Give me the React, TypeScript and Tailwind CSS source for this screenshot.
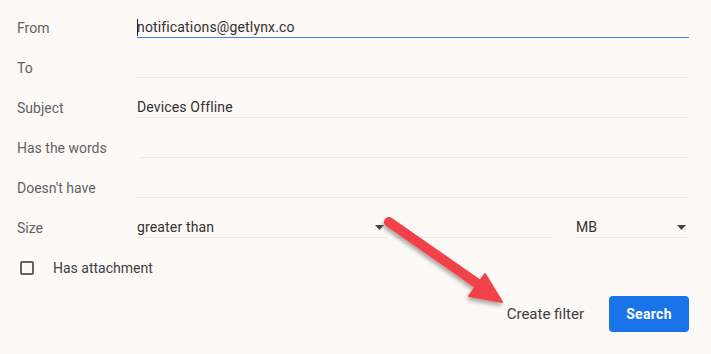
import React from "react";

function Caret() {
  return (
    <svg width="9" height="5" viewBox="0 0 9 5" className="shrink-0">
      <path d="M0 0 L9 0 L4.5 5 Z" fill="#444746" />
    </svg>
  );
}

function Row({ label, children }: { label: string; children?: React.ReactNode }) {
  return (
    <div className="flex h-10 items-center">
      <div className="w-[120px] shrink-0 text-[14px] text-[#5f6368]">{label}</div>
      {children}
    </div>
  );
}

function Field({ value, focused, indent }: { value?: string; focused?: boolean; indent?: boolean }) {
  return (
    <div
      className={
        "flex h-5 flex-1 items-center border-b text-[14px] leading-[19px] tracking-[0.15px] text-[#303134] " +
        (focused ? "border-[#4a80e3]" : "border-[#ebe8e5]") +
        (indent ? " ml-[3px]" : "")
      }
    >
      {focused && <span className="mr-[-1px] h-[17px] w-px bg-[#202124]" />}
      <span>{value}</span>
    </div>
  );
}

export default function App() {
  return (
    <div
      className="relative h-[354px] w-[711px] overflow-hidden bg-[#fdf9f6] pl-[17px] pr-[22px] pt-2"
      style={{ fontFamily: "Roboto, 'Liberation Sans', sans-serif" }}
    >
      <Row label="From">
        <Field value="notifications@getlynx.co" focused />
      </Row>
      <Row label="To">
        <Field />
      </Row>
      <Row label="Subject">
        <Field value="Devices Offline" />
      </Row>
      <Row label="Has the words">
        <Field indent />
      </Row>
      <Row label="Doesn't have">
        <Field />
      </Row>
      <Row label="Size">
        <div className="flex h-5 w-[251px] items-center justify-between border-b border-[#ebe8e5] pr-[4px] text-[14px] leading-[19px] tracking-[0.15px] text-[#303134]">
          <span>greater than</span>
          <Caret />
        </div>
        <div className="ml-2 h-5 w-[155px] border-b border-[#ebe8e5]" />
        <div className="ml-[25px] flex h-5 flex-1 items-center justify-between border-b border-[#ebe8e5] pr-[3px] text-[14px] leading-[19px] tracking-[0.15px] text-[#303134]">
          <span>MB</span>
          <Caret />
        </div>
      </Row>
      <div className="flex h-10 items-center">
        <div className="ml-[3px] h-[14px] w-[14px] rounded-[2px] border-2 border-[#5f6368]" />
        <span className="ml-[19px] text-[14px] text-[#3c4043]">Has attachment</span>
      </div>
      <div className="mt-2 flex items-center justify-end">
        <span className="mr-[25px] text-[15px] text-[#3c4043]">Create filter</span>
        <button className="h-9 w-20 rounded-[4px] bg-[#1a73e8] text-[14px] font-bold tracking-[0.3px] text-white">
          Search
        </button>
      </div>
      <svg
        className="pointer-events-none absolute left-0 top-0"
        width="711"
        height="354"
        viewBox="0 0 711 354"
      >
        <defs>
          <filter id="sh" x="-20%" y="-20%" width="140%" height="140%">
            <feDropShadow dx="-1" dy="3" stdDeviation="2" floodColor="#000" floodOpacity="0.35" />
          </filter>
        </defs>
        <g filter="url(#sh)">
          <line x1="389" y1="222" x2="478" y2="284" stroke="#f2434a" strokeWidth="10" strokeLinecap="round" />
          <path d="M485 274 L502 302 L469 296 Z" fill="#f2434a" stroke="#f2434a" strokeWidth="2" strokeLinejoin="round" />
        </g>
      </svg>
    </div>
  );
}
